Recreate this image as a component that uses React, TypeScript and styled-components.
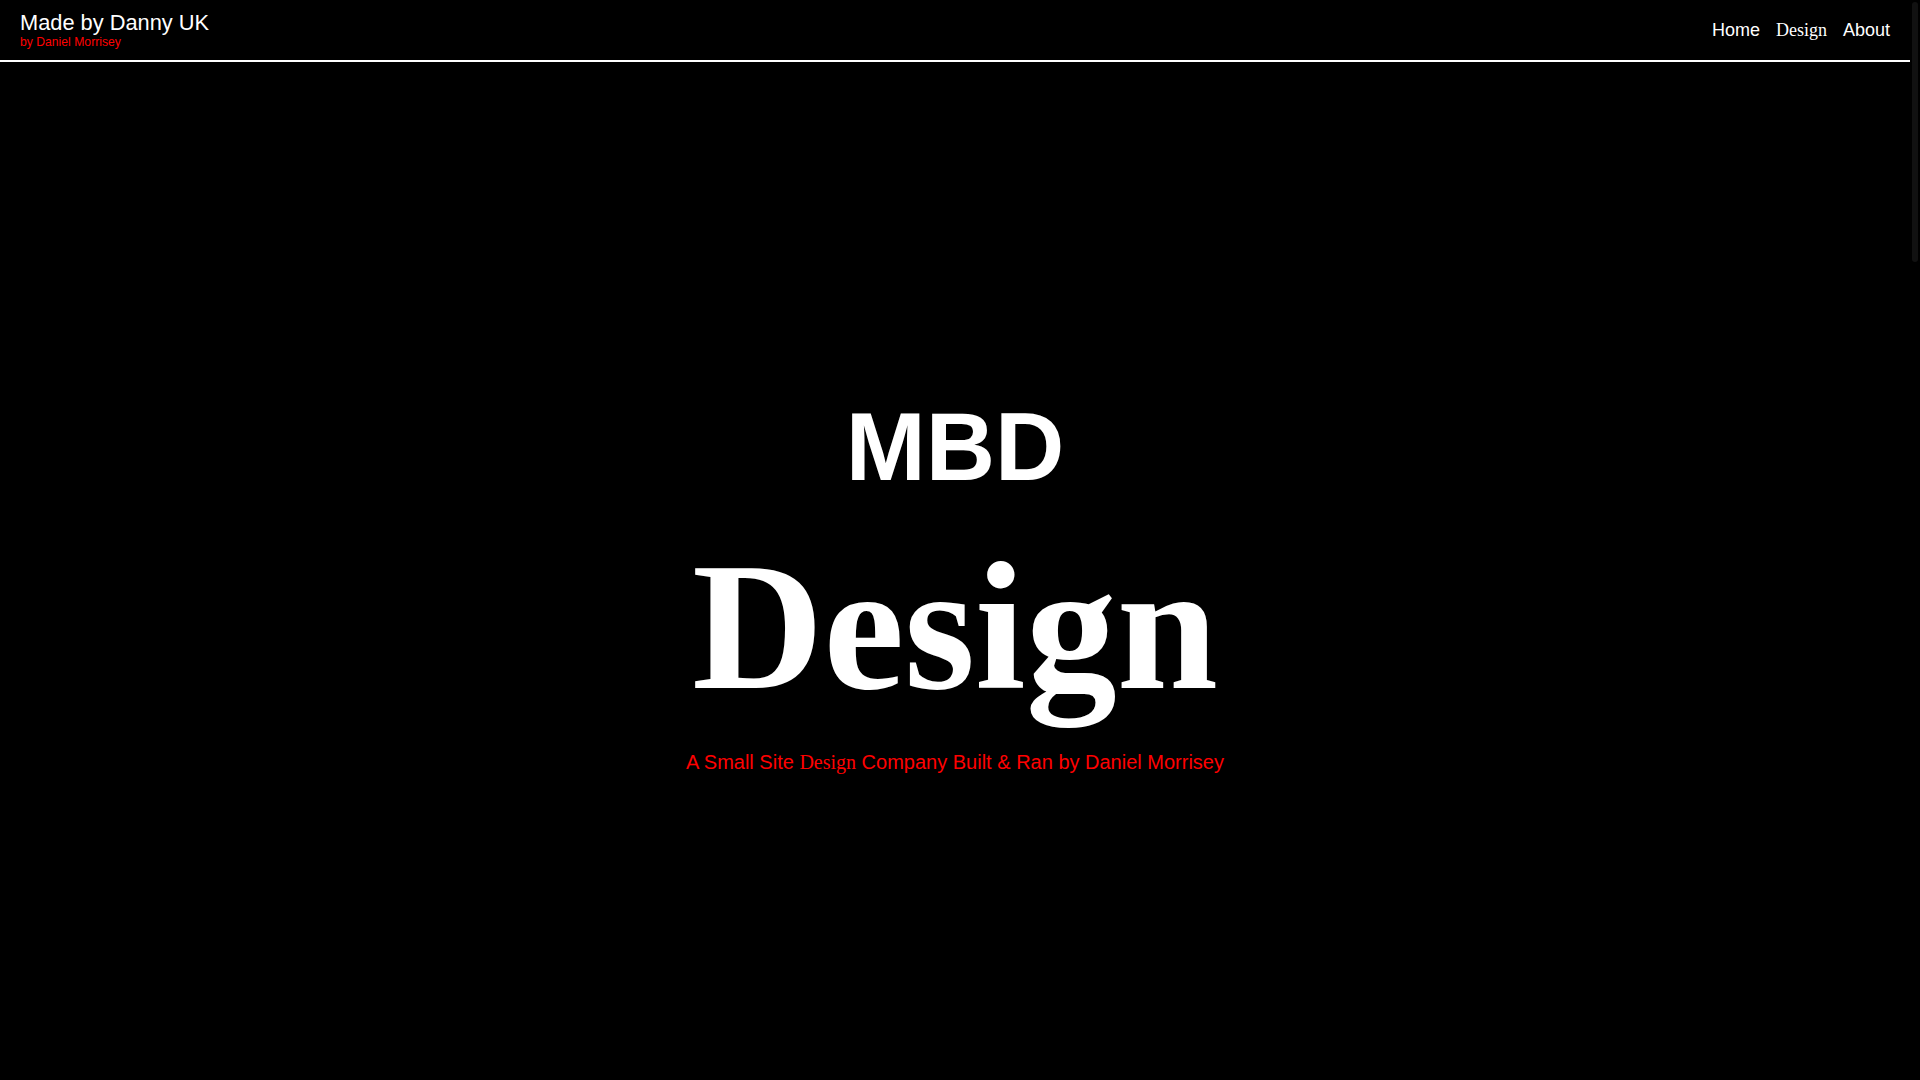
import React from 'react';
import styled, { createGlobalStyle } from 'styled-components';

const GlobalStyle = createGlobalStyle`
  html,
  body {
    margin: 0;
    background: #000;
    color: #fff;
    font-family: 'Liberation Sans', Arial, sans-serif;
  }
`;

const Shell = styled.div`
  display: flex;
  height: 100vh;
  overflow: hidden;
`;

const Page = styled.div`
  flex: 1;
  min-width: 0;
`;

/* the window's scrollbar, as the screenshot shows it */
const ScrollRail = styled.div`
  width: 10px;
  flex-shrink: 0;
  display: flex;
  flex-direction: column;
  align-items: center;
  background: #000;
`;

const ScrollThumb = styled.div`
  width: 6px;
  height: 260px;
  margin-top: 2px;
  border-radius: 3px;
  background: #111;
`;

const Header = styled.header`
  display: flex;
  justify-content: space-between;
  align-items: flex-start;
  height: 60px;
  padding: 0 20px;
  border-bottom: 2px solid #fff;
`;

const Brand = styled.div`
  display: flex;
  flex-direction: column;
  padding-top: 11px;
`;

const BrandTitle = styled.a`
  font-size: 21.8px;
  line-height: 24px;
  color: #fff;
  text-decoration: none;
`;

const BrandSub = styled.span`
  font-size: 12.2px;
  line-height: 14px;
  color: #ff0000;
`;

const Nav = styled.nav`
  display: flex;
  gap: 16px;
  padding-top: 20px;
`;

const NavLink = styled.a<{ $serif?: boolean }>`
  font-family: ${(p) =>
    p.$serif ? "'Liberation Serif', 'Times New Roman', serif" : "'Liberation Sans', Arial, sans-serif"};
  font-size: 18px;
  line-height: 20px;
  color: #fff;
  text-decoration: none;
`;

const Hero = styled.section`
  display: flex;
  flex-direction: column;
  align-items: center;
  padding-top: 330px;
`;

const Mark = styled.h1`
  margin: 0 0 24px;
  font-size: 96px;
  line-height: 110px;
  font-weight: 700;
`;

const Word = styled.h2`
  margin: 0 0 22px;
  font-family: 'Liberation Serif', 'Times New Roman', serif;
  font-size: 182px;
  line-height: 202px;
  font-weight: 700;
`;

const Tagline = styled.p`
  margin: 0;
  font-size: 20px;
  line-height: 24px;
  color: #ff0000;
`;

const SerifWord = styled.span`
  font-family: 'Liberation Serif', 'Times New Roman', serif;
`;

const App: React.FunctionComponent = () => {
  return (
    <>
      <GlobalStyle />
      <Shell>
        <Page>
          <Header>
            <Brand>
              <BrandTitle href="#">Made by Danny UK</BrandTitle>
              <BrandSub>by Daniel Morrisey</BrandSub>
            </Brand>
            <Nav>
              <NavLink href="#">Home</NavLink>
              <NavLink href="#" $serif>
                Design
              </NavLink>
              <NavLink href="#">About</NavLink>
            </Nav>
          </Header>
          <Hero>
            <Mark>MBD</Mark>
            <Word>Design</Word>
            <Tagline>
              A Small Site <SerifWord>Design</SerifWord> Company Built &amp; Ran by Daniel Morrisey
            </Tagline>
          </Hero>
        </Page>
        <ScrollRail>
          <ScrollThumb />
        </ScrollRail>
      </Shell>
    </>
  );
};

export default App;
